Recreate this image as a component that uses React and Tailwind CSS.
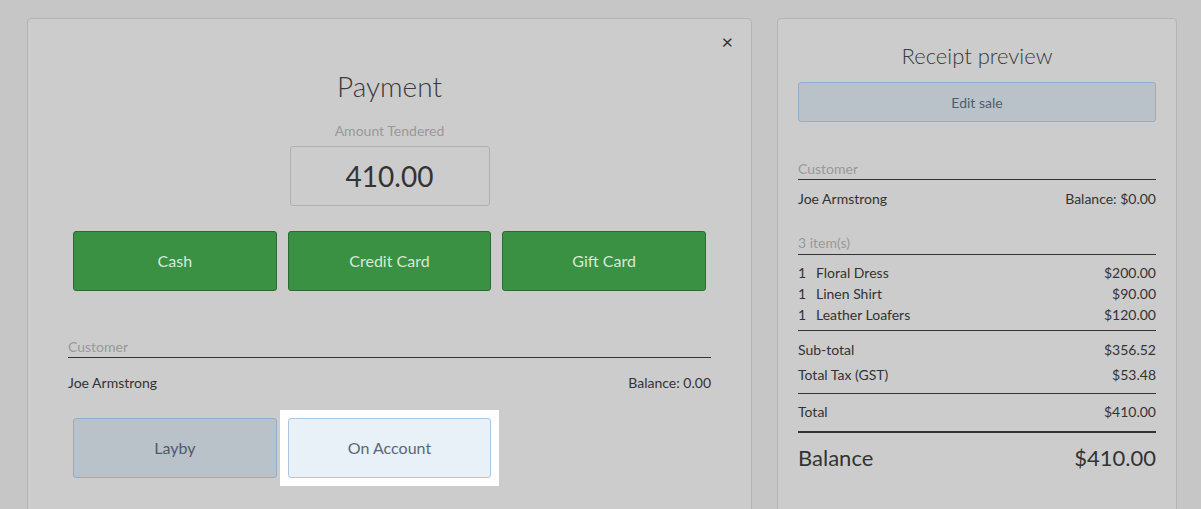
import React from "react";

const items = [
  { qty: 1, name: "Floral Dress", price: "$200.00" },
  { qty: 1, name: "Linen Shirt", price: "$90.00" },
  { qty: 1, name: "Leather Loafers", price: "$120.00" },
];

const App = () => {
  return (
    <div
      className="min-h-[509px] h-[509px] overflow-hidden bg-[#c6c6c6] text-[#333]"
      style={{ fontFamily: "Lato, 'Open Sans', sans-serif" }}
    >
      <div className="flex items-start gap-[25px] pl-[27px] pt-[18px]">
        {/* payment panel */}
        <div className="relative w-[725px] h-[520px] rounded-[4px] border border-[#b4b4b4] bg-[#cccccc] px-[40px] pt-[50px]">
          <button className="absolute right-[18px] top-[12px] text-[20px] leading-none text-[#333]">
            ×
          </button>
          <h1 className="text-center text-[28px] font-light leading-[34px] text-[#3a3a3a]">
            Payment
          </h1>
          <div className="mt-[20px] text-center text-[14px] leading-[16px] text-[#999]">
            Amount Tendered
          </div>
          <div className="mx-auto mt-[7px] flex h-[60px] w-[200px] items-center justify-center rounded-[3px] border border-[#b0b0b0] text-[28px] leading-none text-[#333]">
            410.00
          </div>
          <div className="mx-[5px] mt-[25px] grid grid-cols-3 gap-[11px]">
            {["Cash", "Credit Card", "Gift Card"].map((label) => (
              <button
                key={label}
                className="h-[60px] rounded-[3px] border border-[#2c6a33] bg-[#3a9143] text-[16px] text-[#d8e8d9]"
              >
                {label}
              </button>
            ))}
          </div>
          <div className="mt-[48px] border-b border-[#333] pb-[2px] text-[14px] leading-[16px] text-[#999]">
            Customer
          </div>
          <div className="mt-[15px] flex justify-between text-[14px] leading-[20px]">
            <span>Joe Armstrong</span>
            <span>Balance: 0.00</span>
          </div>
          <div className="mx-[5px] mt-[25px] grid grid-cols-3 gap-[11px]">
            <button className="h-[60px] rounded-[3px] border border-[#93aec8] bg-[#b9c1c9] text-[16px] text-[#4b5b69]">
              Layby
            </button>
            <div className="-m-[8px] bg-white p-[8px]">
              <button className="h-[60px] w-full rounded-[3px] border border-[#aac8e2] bg-[#e8f0f8] text-[16px] text-[#5a6875]">
                On Account
              </button>
            </div>
          </div>
        </div>

        {/* receipt panel */}
        <div className="w-[400px] h-[520px] rounded-[4px] border border-[#b4b4b4] bg-[#cccccc] px-[20px] pt-[24px]">
          <h2 className="text-center text-[22px] font-light leading-[26px] text-[#3a3a3a]">
            Receipt preview
          </h2>
          <button className="mt-[13px] h-[40px] w-full rounded-[3px] border border-[#93aec8] bg-[#b9c1c9] text-[14px] text-[#4e5d6a]">
            Edit sale
          </button>
          <div className="mt-[39px] border-b border-[#333] pb-[2px] text-[14px] leading-[16px] text-[#999]">
            Customer
          </div>
          <div className="mt-[9px] flex justify-between text-[14px] leading-[20px]">
            <span>Joe Armstrong</span>
            <span>Balance: $0.00</span>
          </div>
          <div className="mt-[26px] border-b border-[#333] pb-[3px] text-[14px] leading-[16px] text-[#999]">
            3 item(s)
          </div>
          <div className="mt-[7px] border-b border-[#333] pb-[5px] text-[14px] leading-[21px]">
            {items.map((item) => (
              <div key={item.name} className="flex justify-between">
                <span>
                  <span className="inline-block w-[18px]">{item.qty}</span>
                  {item.name}
                </span>
                <span>{item.price}</span>
              </div>
            ))}
          </div>
          <div className="border-b border-[#333] pb-[8px] pt-[9px] text-[14px] leading-[20px]">
            <div className="flex justify-between">
              <span>Sub-total</span>
              <span>$356.52</span>
            </div>
            <div className="mt-[5px] flex justify-between">
              <span>Total Tax (GST)</span>
              <span>$53.48</span>
            </div>
          </div>
          <div className="flex justify-between border-b-2 border-[#333] pb-[9px] pt-[8px] text-[14px] leading-[20px]">
            <span>Total</span>
            <span>$410.00</span>
          </div>
          <div className="mt-[11px] flex justify-between text-[22px] leading-[28px]">
            <span>Balance</span>
            <span>$410.00</span>
          </div>
        </div>
      </div>
    </div>
  );
};

export default App;
